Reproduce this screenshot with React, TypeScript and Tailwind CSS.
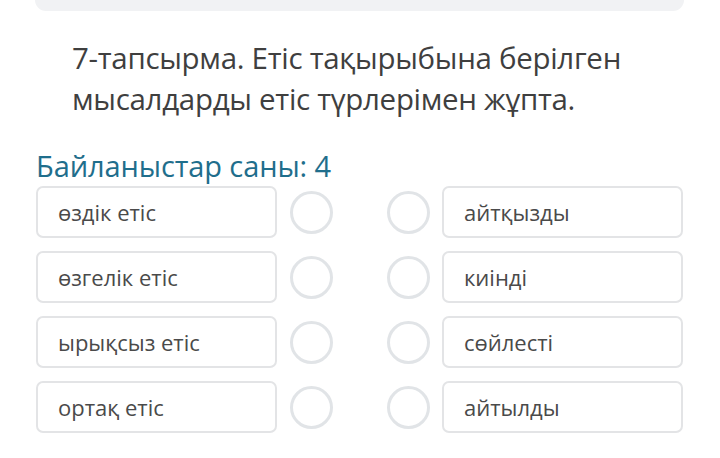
const leftItems = ["өздік етіс", "өзгелік етіс", "ырықсыз етіс", "ортақ етіс"];
const rightItems = ["айтқызды", "киінді", "сөйлесті", "айтылды"];

function Circle() {
  return <div className="w-[43px] h-[43px] rounded-full border-[3px] border-[#e1e4e7] bg-white flex-shrink-0" />;
}

export default function App() {
  return (
    <div className="w-[720px] h-[458px] bg-white overflow-hidden font-['Open_Sans',sans-serif]">
      {/* top card remnant */}
      <div className="ml-[35px] w-[649px] h-[11px] bg-[#f1f2f4] rounded-b-[12px]" />

      {/* Question */}
      <div className="pl-[72px] pr-[40px] mt-[26px] text-[29.5px] leading-[41px] text-[#3f3f3f] tracking-[-0.3px]">
        7-тапсырма. Етіс тақырыбына берілген мысалдарды етіс түрлерімен жұпта.
      </div>

      {/* Matching */}
      <div className="pl-[36px] mt-[29px]">
        <div className="text-[29px] leading-[36px] text-[#1f6e8c] tracking-[-0.1px]">
          Байланыстар саны: 4
        </div>
        <div className="mt-[2px] flex flex-col gap-[13px]">
          {leftItems.map((left, i) => (
            <div key={left} className="flex items-center">
              <div className="w-[241px] h-[52px] rounded-[7px] border-2 border-[#e3e4e6] flex items-center pl-[20px] text-[22px] text-[#4a4a4a]">
                {left}
              </div>
              <div className="ml-[13px]">
                <Circle />
              </div>
              <div className="ml-[54px]">
                <Circle />
              </div>
              <div className="ml-[12px] w-[241px] h-[52px] rounded-[7px] border-2 border-[#e3e4e6] flex items-center pl-[20px] text-[22px] text-[#4a4a4a]">
                {rightItems[i]}
              </div>
            </div>
          ))}
        </div>
      </div>
    </div>
  );
}
